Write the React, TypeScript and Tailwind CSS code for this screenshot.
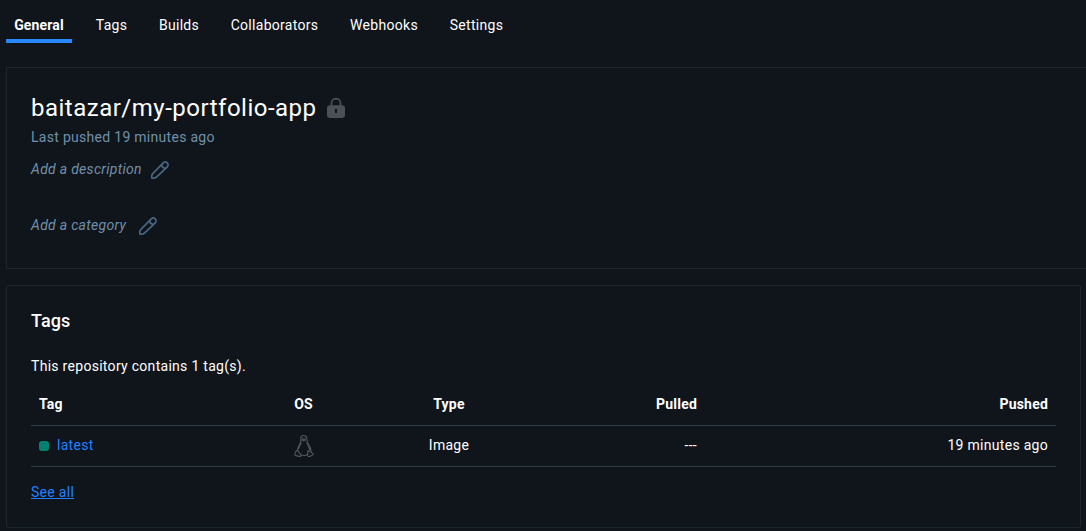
import React from "react";

const tabs = [
  { label: "General", width: "w-[66px]" },
  { label: "Tags", width: "w-[47px]" },
  { label: "Builds", width: "w-[56px]" },
  { label: "Collaborators", width: "w-[103px]" },
  { label: "Webhooks", width: "w-[84px]" },
  { label: "Settings", width: "w-[69px]" },
];

function LockIcon() {
  return (
    <svg width="18" height="20" viewBox="0 0 18 20" className="block shrink-0">
      <path d="M4.500 9V5.200a4.500 4.500 0 0 1 9 0V9" fill="none" stroke="#4c4f54" strokeWidth="1.8" />
      <path
        fill="#4c4f54"
        fillRule="evenodd"
        d="M3 7.300h12a3 3 0 0 1 3 3V17a3 3 0 0 1-3 3H3a3 3 0 0 1-3-3v-6.700a3 3 0 0 1 3-3ZM9 10.800a1.200 1.200 0 0 0-1 1.900v2.300h2v-2.300a1.200 1.200 0 0 0-1-1.900Z"
      />
    </svg>
  );
}

function PencilIcon() {
  return (
    <svg
      width="20"
      height="20"
      viewBox="0 0 20 20"
      fill="none"
      stroke="#486680"
      strokeWidth="1.700"
      strokeLinejoin="round"
      strokeLinecap="round"
      className="mt-px -mb-px block shrink-0"
    >
      <path d="M13.300 2.900a2.600 2.600 0 0 1 4 3.900L6.400 17.200C5.500 18.100 3.700 18.400 1.900 18.200C1.600 16.500 1.800 14.600 2.700 13.600Z" />
      <path d="M11.600 4.700c.2 2.200 1.600 3.500 4 3.700" />
    </svg>
  );
}

function PenguinIcon() {
  return (
    <svg width="20" height="24" viewBox="0 0 20 24" fill="none" stroke="#53565a" strokeWidth="1.1" strokeLinejoin="round" className="mx-auto block">
      <path d="M6.700 8V4.500C6.700 2.600 7.900 1.500 9.700 1.500s3.100 1.200 3.100 3.200c0 3 .5 4.300 2.200 6.400 1.300 1.700 1.900 3.400 1.700 5.700" />
      <path d="M6.700 8C6 10.500 3.500 13 3.300 16.500M7.200 8.500C6.500 11 5 12.700 4.500 15M12.700 8.500c.9 2.700 2.400 4 2.900 7.500" />
      <path d="m3.600 16.300 3.300 4.500c.5 1.300-.5 1.900-1.800 1.600l-3.300-.8c-1-.3-1.100-.7-.8-1.700.3-.8-.1-1.700.5-2.100ZM14 16.600c.6 1 1.800 1 2.800.1l.7 1.800 1.500 1.300c.5.7 0 1-.8 1.400l-1.900 1.100c-1.400.6-2.700.1-2.700-1.200Z" />
      <path d="M6.900 20.800c2 .9 4.700.9 6.700-.2M7.800 5.900l1.900-.9 2 .9-1.800 1.200Z" />
      <path d="M8.500 3.500v1M11 3.500v1" />
    </svg>
  );
}

export default function App() {
  return (
    <div className="h-[531px] overflow-hidden bg-[#10151b] pl-1.5 font-['Roboto',sans-serif] text-sm leading-5 tracking-[0.29px] text-white">
      <nav className="flex h-[43px] gap-4">
        {tabs.map((tab, i) => (
          <a
            key={tab.label}
            className={`flex shrink-0 justify-center whitespace-nowrap pt-[15px] ${tab.width} ${
              i === 0 ? "border-b-4 border-[#2787ff] font-bold tracking-[0.15px]" : ""
            }`}
          >
            {tab.label}
          </a>
        ))}
      </nav>

      <section className="mt-6 h-[202px] rounded-l-xs border border-r-0 border-[#1c262d] px-6 pt-6">
        <div className="flex items-center gap-2.5">
          <h1 className="text-2xl leading-8 tracking-[0.5px]">baitazar/my-portfolio-app</h1>
          <LockIcon />
        </div>
        <p className="mt-[3px] text-[#7090aa]">Last pushed 19 minutes ago</p>
        <div className="mt-3 flex items-center gap-2 text-[#7090aa]">
          <em>Add a description</em>
          <PencilIcon />
        </div>
        <div className="mt-9 flex items-center gap-3 text-[#7090aa]">
          <em>Add a category</em>
          <PencilIcon />
        </div>
      </section>

      <section className="mt-4 h-[243px] w-[1075px] rounded-xs border border-[#1c262d] px-6 pt-[23px]">
        <h2 className="text-lg font-medium leading-6 tracking-[0.1px]">Tags</h2>
        <p className="mt-[23px]">This repository contains 1 tag(s).</p>
        <table className="mt-[7px] w-[1025px] table-fixed border-collapse">
          <colgroup>
            <col className="w-[206px]" />
            <col className="w-[133px]" />
            <col className="w-[158px]" />
            <col className="w-[177px]" />
            <col className="w-[351px]" />
          </colgroup>
          <thead>
            <tr className="h-[42px] border-b border-[#2c3e49] tracking-[0.2px]">
              <th className="px-2 text-left font-bold">Tag</th>
              <th className="px-2 text-center font-bold">OS</th>
              <th className="px-2 text-center font-bold">Type</th>
              <th className="px-2 text-right font-bold">Pulled</th>
              <th className="px-2 text-right font-bold">Pushed</th>
            </tr>
          </thead>
          <tbody>
            <tr className="h-[41px] border-b border-[#2c3e49]">
              <td className="px-2 pb-0.5">
                <div className="flex items-center gap-2">
                  <span className="mt-0.5 size-2.5 rounded-[3px] bg-[#008471]" />
                  <a className="text-[#2580ff]">latest</a>
                </div>
              </td>
              <td className="px-2 leading-none"><PenguinIcon /></td>
              <td className="px-2 pb-0.5 text-center">Image</td>
              <td className="px-2 pb-0.5 text-right">---</td>
              <td className="px-2 pb-0.5 text-right">19 minutes ago</td>
            </tr>
          </tbody>
        </table>
        <a className="mt-[15px] inline-block text-[#2580ff] underline">See all</a>
      </section>
    </div>
  );
}
